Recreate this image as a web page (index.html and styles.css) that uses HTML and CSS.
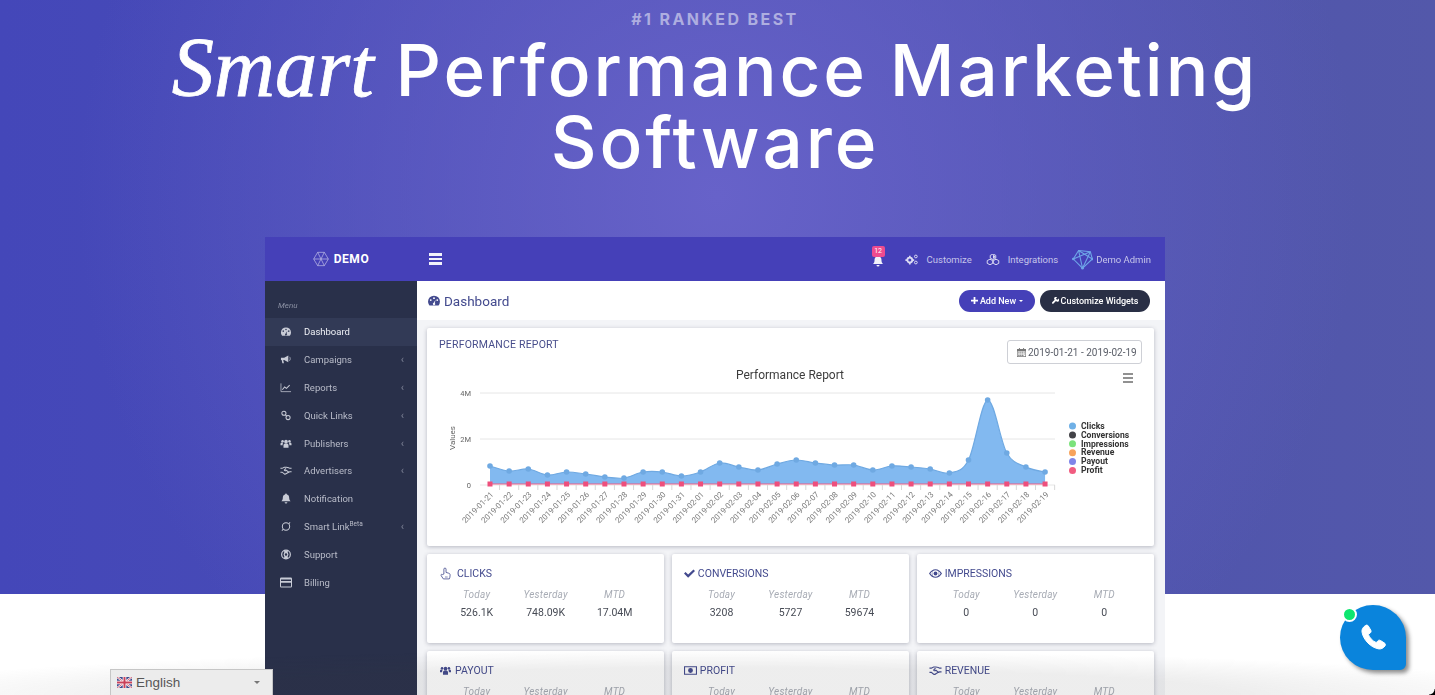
FILE: index.html
```html
<!DOCTYPE html>
<html lang="en">
<head>
  <meta charset="UTF-8" />
  <meta name="viewport" content="width=device-width, initial-scale=1.0"/>
  <title>Smart Performance Marketing Software</title>
  <link rel="stylesheet" href="styles.css">
</head>
<body>
  <svg class="sprite" aria-hidden="true">
    <symbol id="i-gauge" viewBox="0 0 24 24"><path fill-rule="evenodd" d="M12 3a11 11 0 0 0-11 11c0 2.700 1 5.200 2.600 7h16.800A11 11 0 0 0 23 14 11 11 0 0 0 12 3zM6 9.500a1.700 1.700 0 1 1 0 3.400 1.700 1.700 0 0 1 0-3.400zm12 0a1.700 1.700 0 1 1 0 3.400 1.700 1.700 0 0 1 0-3.400zM12 6a1.700 1.700 0 1 1 0 3.400A1.700 1.700 0 0 1 12 6zm3 4.500-1.600 6a2.200 2.200 0 1 1-2-.3z"/></symbol>
    <symbol id="i-bullhorn" viewBox="0 0 24 24"><path d="M1 8h7l9-5v15l-9-5H6l1.500 7H4L2.500 13H1z"/><path d="M19 6c3 1 3 8 0 9" fill="none" stroke="currentColor" stroke-width="1.500"/></symbol>
    <symbol id="i-chart" viewBox="0 0 24 24"><path d="M1 3v18h22" fill="none" stroke="currentColor" stroke-width="1.600"/><path d="M4 17l5-6 4 3 7-7" fill="none" stroke="currentColor" stroke-width="2.200"/></symbol>
    <symbol id="i-link" viewBox="0 0 24 24"><g fill="none" stroke="currentColor" stroke-width="2.200"><circle cx="7.500" cy="7" r="4.500"/><circle cx="16.500" cy="16.500" r="4.500"/><path d="M10.500 10l3 3.500"/></g></symbol>
    <symbol id="i-users" viewBox="0 0 24 24"><circle cx="12" cy="8" r="4"/><circle cx="4.500" cy="7" r="2.800"/><circle cx="19.500" cy="7" r="2.800"/><path d="M6.500 21v-5c0-3 2-4 5.500-4s5.500 1 5.500 4v5zM0 16v-3c0-2 1.500-3 4.500-3l1.500.5A6 6 0 0 0 4.800 16zM24 16v-3c0-2-1.500-3-4.500-3l-1.500.5a6 6 0 0 1 1.200 5.500z"/></symbol>
    <symbol id="i-hands" viewBox="0 0 28 20"><g fill="none" stroke="currentColor" stroke-width="2.400"><path d="M1 5h4l5-2.500h5l5 1 3 1.500h4M1 14h4l5 4c2 1 3 .5 4-.5l6-3.500 3-1h4"/><path d="M14 5l-4 4c1 2 3 2 5 .5l6 5"/></g></symbol>
    <symbol id="i-bell" viewBox="0 0 24 24"><path d="M12 1a2 2 0 0 1 2 2c4 1 5 4 5 8 0 3 1 5 3 7H2c2-2 3-4 3-7 0-4 1-7 5-8a2 2 0 0 1 2-2zM9 20h6a3 3 0 0 1-6 0z"/></symbol>
    <symbol id="i-swirl" viewBox="0 0 24 24"><g fill="none" stroke="currentColor" stroke-width="2.200"><circle cx="12" cy="12" r="8"/><path d="M21 3l-3 3M3 21l3-3"/></g></symbol>
    <symbol id="i-support" viewBox="0 0 24 24"><g fill="none" stroke="currentColor" stroke-width="2.600"><circle cx="12" cy="12" r="9.500"/><circle cx="12" cy="12" r="4"/></g><path d="M8 3h8v5H8zM8 16h8v5H8z"/></symbol>
    <symbol id="i-card" viewBox="0 0 24 20"><path fill-rule="evenodd" d="M0 2.500A2.500 2.500 0 0 1 2.500 0h19A2.500 2.500 0 0 1 24 2.500v15a2.500 2.500 0 0 1-2.500 2.500h-19A2.500 2.500 0 0 1 0 17.500zM2 4v3h20V4zm0 6.500V18h20v-7.500z"/></symbol>
    <symbol id="i-cogs" viewBox="0 0 24 20"><g fill="none" stroke="currentColor"><circle cx="8" cy="11" r="4.500" stroke-width="3.400"/><circle cx="19" cy="4.500" r="2.500" stroke-width="1.800"/><circle cx="19" cy="15.500" r="2.500" stroke-width="1.800"/></g><path d="M6.500 3h3v3h-3zM6.500 16h3v3h-3zM0 9.500h3v3H0zM13 9.500h3v3h-3z"/></symbol>
    <symbol id="i-cubes" viewBox="0 0 24 20"><path d="M12 0l5 2.500v5L12 10 7 7.500v-5zM6.500 9.500l5 2.500v5l-5 2.500-5-2.500v-5zM17.500 9.500l5 2.500v5l-5 2.500-5-2.500v-5z" fill="none" stroke="currentColor" stroke-width="1.800"/><path d="M12 1.500l3.500 2v3L12 8.500z"/></symbol>
    <symbol id="i-plus" viewBox="0 0 12 12"><path d="M4.500 0h3v4.500H12v3H7.500V12h-3V7.500H0v-3h4.500z"/></symbol>
    <symbol id="i-wrench" viewBox="0 0 12 12"><path d="M11.600 2.400 9.500 4.500 7.500 4 7 2 9.100 0A3.300 3.300 0 0 0 4.600 4.800L.4 9a1.500 1.500 0 0 0 2.200 2.200l4.200-4.200a3.300 3.300 0 0 0 4.800-4.600z"/></symbol>
    <symbol id="i-calendar" viewBox="0 0 14 14"><path fill-rule="evenodd" d="M3 0h1.500v1.500h5V0H11v1.500h3V14H0V1.500h3zM1 5v8h12V5zm1 1h2v1.500H2zm3 0h2v1.500H5zm3 0h2v1.500H8zm3 0h1v1.500h-1zM2 8.500h2V10H2zm3 0h2V10H5zm3 0h2V10H8zm3 0h1V10h-1zM2 11h2v1.500H2zm3 0h2v1.500H5zm3 0h2v1.500H8z"/></symbol>
    <symbol id="i-pointer" viewBox="0 0 20 24"><path d="M7 13V4a2 2 0 0 1 4 0v6l5 1.500c2 .6 2.500 1.500 2.500 3.500 0 3-.5 5-1.500 7H6l-4-6c-1-2 1-3.500 2.500-2z" fill="none" stroke="currentColor" stroke-width="1.500"/><path d="M9 17h5v3H9z" opacity=".4"/></symbol>
    <symbol id="i-check" viewBox="0 0 16 12"><path d="M0 6l2.200-2.200L6 7.500 13.800 0 16 2.200 6 12z"/></symbol>
    <symbol id="i-eye" viewBox="0 0 24 16"><path fill-rule="evenodd" d="M12 0c5 0 9 3 12 8-3 5-7 8-12 8S3 13 0 8c3-5 7-8 12-8zm0 2a6 6 0 1 0 0 12 6 6 0 0 0 0-12zM2.500 8c1.200 1.800 2.500 3.200 4 4.200a8 8 0 0 1 0-8.400C5 4.800 3.700 6.200 2.500 8zm19 0c-1.200-1.800-2.500-3.200-4-4.200a8 8 0 0 1 0 8.400c1.500-1 2.800-2.400 4-4.200z"/><circle cx="12" cy="8" r="3.500"/></symbol>
    <symbol id="i-money" viewBox="0 0 24 18"><path fill-rule="evenodd" d="M0 1h24v16H0zm2 2v12h20V3zm10 1.500a4.500 4.500 0 1 1 0 9 4.500 4.500 0 0 1 0-9z"/></symbol>
    <symbol id="i-logo" viewBox="0 0 24 24"><g fill="none" stroke="currentColor" stroke-width="1"><path d="M7 2h10l6 10-6 10H7L1 12z"/><path d="M7 2l10 20M17 2L7 22M1 12h22"/></g></symbol>
    <symbol id="i-mesh" viewBox="0 0 32 32"><g fill="none" stroke="currentColor" stroke-width="1.600"><path d="M10 3l18 2 3 11-15 14L2 16z"/><path d="M10 3l6 27M28 5L2 16M31 16L10 3M28 5L16 30"/></g><circle cx="16" cy="30" r="2" fill="currentColor"/><circle cx="2" cy="16" r="2" fill="currentColor"/><circle cx="31" cy="16" r="2" fill="currentColor"/></symbol>
  </svg>

  <section class="hero">
    <p class="eyebrow">#1 RANKED BEST</p>
    <h1 class="headline"><em>Smart</em> Performance Marketing Software</h1>

    <div class="dash">
      <header class="topbar">
        <div class="brand"><svg class="ic brand-ic"><use href="#i-logo"/></svg>DEMO</div>
        <div class="burger"><span></span><span></span><span></span></div>
        <div class="top-right">
          <div class="bell"><svg class="ic bell-ic"><use href="#i-bell"/></svg><span class="badge">12</span></div>
          <a class="top-link"><svg class="ic top-ic"><use href="#i-cogs"/></svg>Customize</a>
          <a class="top-link"><svg class="ic top-ic"><use href="#i-cubes"/></svg>Integrations</a>
          <a class="top-link admin"><svg class="ic mesh-ic"><use href="#i-mesh"/></svg>Demo Admin</a>
        </div>
      </header>

      <div class="dash-body">
        <nav class="sidebar">
          <p class="menu-label">Menu</p>
          <a class="nav-item active"><svg class="ic nav-ic"><use href="#i-gauge"/></svg>Dashboard</a>
          <a class="nav-item"><svg class="ic nav-ic"><use href="#i-bullhorn"/></svg>Campaigns<i class="chev">&lsaquo;</i></a>
          <a class="nav-item"><svg class="ic nav-ic"><use href="#i-chart"/></svg>Reports<i class="chev">&lsaquo;</i></a>
          <a class="nav-item"><svg class="ic nav-ic"><use href="#i-link"/></svg>Quick Links<i class="chev">&lsaquo;</i></a>
          <a class="nav-item"><svg class="ic nav-ic"><use href="#i-users"/></svg>Publishers<i class="chev">&lsaquo;</i></a>
          <a class="nav-item"><svg class="ic nav-ic"><use href="#i-hands"/></svg>Advertisers<i class="chev">&lsaquo;</i></a>
          <a class="nav-item"><svg class="ic nav-ic"><use href="#i-bell"/></svg>Notification</a>
          <a class="nav-item"><svg class="ic nav-ic"><use href="#i-swirl"/></svg><span>Smart Link<sup>Beta</sup></span><i class="chev">&lsaquo;</i></a>
          <a class="nav-item"><svg class="ic nav-ic"><use href="#i-support"/></svg>Support</a>
          <a class="nav-item"><svg class="ic nav-ic"><use href="#i-card"/></svg>Billing</a>
        </nav>

        <main class="content">
          <div class="page-head">
            <h2 class="page-title"><svg class="ic title-ic"><use href="#i-gauge"/></svg>Dashboard</h2>
            <div class="head-btns">
              <button class="pill pill-blue"><svg class="ic pill-ic"><use href="#i-plus"/></svg>Add New<i class="caret"></i></button>
              <button class="pill pill-dark"><svg class="ic pill-ic"><use href="#i-wrench"/></svg>Customize Widgets</button>
            </div>
          </div>

          <div class="panels">
            <div class="card report">
              <div class="report-head">
                <h3>PERFORMANCE REPORT</h3>
                <div class="date-box"><svg class="ic cal-ic"><use href="#i-calendar"/></svg>2019-01-21 - 2019-02-19</div>
              </div>
              <svg id="chart" class="chart" viewBox="0 0 727 182"></svg>
            </div>

            <div class="stats">
              <div class="card stat">
                <h4><svg class="ic stat-ic ptr"><use href="#i-pointer"/></svg>CLICKS</h4>
                <div class="stat-cols">
                  <div><em>Today</em><b>526.1K</b></div>
                  <div><em>Yesterday</em><b>748.09K</b></div>
                  <div><em>MTD</em><b>17.04M</b></div>
                </div>
              </div>
              <div class="card stat">
                <h4><svg class="ic stat-ic chk"><use href="#i-check"/></svg>CONVERSIONS</h4>
                <div class="stat-cols">
                  <div><em>Today</em><b>3208</b></div>
                  <div><em>Yesterday</em><b>5727</b></div>
                  <div><em>MTD</em><b>59674</b></div>
                </div>
              </div>
              <div class="card stat">
                <h4><svg class="ic stat-ic"><use href="#i-eye"/></svg>IMPRESSIONS</h4>
                <div class="stat-cols">
                  <div><em>Today</em><b>0</b></div>
                  <div><em>Yesterday</em><b>0</b></div>
                  <div><em>MTD</em><b>0</b></div>
                </div>
              </div>
              <div class="card stat">
                <h4><svg class="ic stat-ic"><use href="#i-users"/></svg>PAYOUT</h4>
                <div class="stat-cols">
                  <div><em>Today</em><b>0</b></div>
                  <div><em>Yesterday</em><b>0</b></div>
                  <div><em>MTD</em><b>0</b></div>
                </div>
              </div>
              <div class="card stat">
                <h4><svg class="ic stat-ic"><use href="#i-money"/></svg>PROFIT</h4>
                <div class="stat-cols">
                  <div><em>Today</em><b>0</b></div>
                  <div><em>Yesterday</em><b>0</b></div>
                  <div><em>MTD</em><b>0</b></div>
                </div>
              </div>
              <div class="card stat">
                <h4><svg class="ic stat-ic"><use href="#i-hands"/></svg>REVENUE</h4>
                <div class="stat-cols">
                  <div><em>Today</em><b>0</b></div>
                  <div><em>Yesterday</em><b>0</b></div>
                  <div><em>MTD</em><b>0</b></div>
                </div>
              </div>
            </div>
          </div>
        </main>
      </div>
    </div>
  </section>

  <div class="bottom-fade"></div>
  <div class="corner"></div>

  <div class="lang">
    <svg class="flag" viewBox="0 0 15 11">
      <rect width="15" height="11" rx="1" fill="#3b4a8c"/>
      <path d="M0 0l15 11M15 0L0 11" stroke="#fff" stroke-width="2.200"/>
      <path d="M0 0l15 11M15 0L0 11" stroke="#c9415a" stroke-width=".8"/>
      <path d="M7.500 0v11M0 5.500h15" stroke="#fff" stroke-width="3.600"/>
      <path d="M7.500 0v11M0 5.500h15" stroke="#c9415a" stroke-width="2"/>
    </svg>
    <span>English</span>
    <i class="lang-caret"></i>
  </div>

  <a class="call">
    <span class="call-dot"></span>
    <svg class="call-ic" viewBox="0 0 28 28"><path d="M6.500 1.500c1-.7 2.200-.5 2.800.5l2.500 4.200c.5 1 .3 2-.5 2.700L9.300 10.300c1 3.200 4.500 7 8 8.300l1.500-1.700c.7-.8 1.800-1 2.700-.4l4 2.600c1 .6 1.200 1.900.5 2.800-1.500 2.100-3.800 3.400-6.300 3-8-1.300-15.300-9-16.700-16.800C2.500 5.400 4.200 3 6.500 1.500z"/></svg>
  </a>

  <script src="chart.js"></script>
</body>
</html>
```

FILE: styles.css
```css
* {
  box-sizing: border-box;
}

html, body {
  height: 100%;
}

body {
  margin: 0;
  height: 695px;
  overflow: hidden;
  background: #fff;
  font-family: 'Inter', sans-serif;
}

.sprite {
  display: none;
}

.ic {
  fill: currentColor;
  flex: none;
}

/* hero */
.hero {
  height: 594px;
  padding: 10px 5px 0 0;
  text-align: center;
  background:
    radial-gradient(circle at 50% 33%, #6762c9 0, rgba(103, 98, 201, 0) 640px),
    linear-gradient(90deg, #4447b9, #5358aa);
}

.eyebrow {
  margin: 0;
  font-size: 16px;
  line-height: 18px;
  font-weight: 700;
  letter-spacing: 2.400px;
  color: #aeaee0;
}

.headline {
  margin: 4px auto 0;
  width: 1150px;
  font-size: 71px;
  line-height: 72px;
  font-weight: 500;
  letter-spacing: 2.900px;
  color: #fff;
}

.headline em {
  font-family: 'Liberation Serif', serif;
  font-size: 84.500px;
  letter-spacing: 0;
  -webkit-text-stroke: 0.8px #fff;
}

/* dashboard shot */
.dash {
  width: 900px;
  height: 458px;
  margin: 59px auto 0;
  overflow: hidden;
  text-align: left;
  font-family: 'Roboto', sans-serif;
  filter: blur(0.45px);
}

.topbar {
  display: flex;
  align-items: center;
  height: 44px;
  background: #4540b8;
  color: #fff;
}

.brand {
  display: flex;
  align-items: center;
  justify-content: center;
  gap: 5px;
  width: 152px;
  font-size: 12px;
  font-weight: 700;
  letter-spacing: 0.6px;
}

.brand-ic {
  width: 16px;
  height: 16px;
  color: #c5c4ea;
}

.burger {
  display: flex;
  flex-direction: column;
  gap: 2px;
  margin-left: 12px;
}

.burger span {
  display: block;
  width: 13px;
  height: 2.500px;
  background: #f2f2fb;
}

.top-right {
  display: flex;
  align-items: center;
  margin-left: auto;
  padding-right: 14px;
  font-size: 9.500px;
  color: #c6c5ea;
}

.bell {
  position: relative;
  width: 12px;
  height: 14px;
  margin-right: 21px;
  color: #f2f2fb;
}

.bell-ic {
  display: block;
  width: 12px;
  height: 12px;
  margin-top: 3px;
}

.badge {
  position: absolute;
  top: -6px;
  left: 0;
  width: 13px;
  height: 11px;
  border-radius: 2px;
  background: #ee4b8f;
  color: #fff;
  font-size: 7px;
  line-height: 11px;
  text-align: center;
}

.top-link {
  display: flex;
  align-items: center;
  margin-right: 14px;
}

.top-ic {
  width: 14px;
  height: 11px;
  margin-right: 8px;
  color: #dcdcf3;
}

.admin {
  margin-right: 0;
}

.mesh-ic {
  width: 21px;
  height: 22px;
  margin-right: 3px;
  color: #6ea6e8;
}

.dash-body {
  display: flex;
  height: 414px;
}

/* sidebar */
.sidebar {
  width: 152px;
  flex: none;
  background: #29304a;
  color: #b9bcc9;
  font-size: 9.500px;
}

.menu-label {
  margin: 0;
  padding: 20px 0 7px 13px;
  height: 37px;
  font-size: 8px;
  font-style: italic;
  color: #8b90a3;
}

.nav-item {
  display: flex;
  align-items: center;
  height: 27.800px;
  padding: 0 13px 0 15px;
}

.nav-item.active {
  background: #323a56;
  color: #eef0f5;
}

.nav-ic {
  width: 12px;
  height: 11px;
  margin-right: 12px;
  color: #c8cbd6;
}

.nav-item sup {
  font-size: 6.500px;
  line-height: 0;
}

.chev {
  margin-left: auto;
  font-style: normal;
  font-size: 11px;
  color: #7d8296;
}

/* content */
.content {
  flex: 1;
  min-width: 0;
  background: #f3f4f7;
}

.page-head {
  display: flex;
  align-items: center;
  justify-content: space-between;
  height: 39px;
  padding: 0 15px 0 10px;
  background: #fff;
}

.page-title {
  display: flex;
  align-items: center;
  margin: 0;
  font-size: 13.500px;
  font-weight: 400;
  color: #434a8e;
}

.title-ic {
  width: 14px;
  height: 13px;
  margin-right: 3px;
}

.head-btns {
  display: flex;
  gap: 5px;
}

.pill {
  display: flex;
  align-items: center;
  justify-content: center;
  height: 22px;
  padding: 0;
  border: 0;
  border-radius: 11px;
  color: #fff;
  font-family: inherit;
  font-size: 9px;
  font-weight: 500;
  white-space: nowrap;
}

.pill-blue {
  width: 76px;
  background: #4540b8;
}

.pill-dark {
  width: 110px;
  background: #292f45;
}

.pill-ic {
  width: 7px;
  height: 7px;
  margin-right: 2px;
}

.caret {
  width: 0;
  height: 0;
  margin-left: 3px;
  border: 2.500px solid transparent;
  border-top-color: #fff;
  border-bottom: 0;
}

.panels {
  padding: 8px 11px 0 10px;
}

.card {
  background: #fff;
  border-radius: 2px;
  box-shadow: 0 1px 4px rgba(40, 44, 70, 0.3);
}

.report {
  height: 218px;
}

.report-head {
  display: flex;
  justify-content: space-between;
  height: 36px;
  padding: 12px 12px 0 12px;
}

.report-head h3 {
  margin: 0;
  font-size: 10.500px;
  line-height: 9px;
  font-weight: 400;
  letter-spacing: 0.2px;
  color: #474d8b;
}

.date-box {
  display: flex;
  align-items: center;
  width: 135px;
  height: 24px;
  padding-left: 9px;
  border: 1px solid #ced0d6;
  border-radius: 3px;
  font-size: 10px;
  color: #5a5e68;
  background: #fff;
}

.cal-ic {
  width: 9px;
  height: 9px;
  margin-right: 2px;
  color: #777;
}

.chart {
  display: block;
  width: 727px;
  height: 182px;
}

.chart text {
  font-family: 'Roboto', sans-serif;
}

.stats {
  display: grid;
  grid-template-columns: repeat(3, 1fr);
  gap: 8px 7.500px;
  margin-top: 8px;
}

.stat {
  height: 89px;
}

.stat h4 {
  display: flex;
  align-items: center;
  height: 37px;
  margin: 0;
  padding: 1px 0 0 12px;
  font-size: 10.500px;
  font-weight: 400;
  color: #434a8e;
}

.stat-ic {
  width: 13px;
  height: 11px;
  margin-right: 3px;
}

.ptr {
  height: 13px;
  margin-right: 5px;
}

.chk {
  width: 11px;
  height: 9px;
}

.stat-cols {
  display: grid;
  grid-template-columns: 69px 69px 69px;
  justify-content: center;
  text-align: center;
  margin-top: -2px;
}

.stat-cols em {
  display: block;
  font-size: 10px;
  line-height: 12px;
  letter-spacing: 0.2px;
  color: #a8acb5;
}

.stat-cols b {
  display: block;
  margin-top: 6px;
  font-size: 10.500px;
  line-height: 12px;
  font-weight: 400;
  color: #474b55;
}

/* page bottom */
.bottom-fade {
  position: absolute;
  left: 0;
  right: 0;
  bottom: 0;
  height: 45px;
  background: radial-gradient(ellipse 60% 100% at 50% 100%, rgba(60, 60, 60, 0.09) 0, rgba(60, 60, 60, 0.09) 60%, rgba(60, 60, 60, 0) 100%);
  pointer-events: none;
}

.corner {
  position: absolute;
  right: 0;
  bottom: 0;
  width: 6px;
  height: 6px;
  background: radial-gradient(circle at 0 0, transparent 5px, #000 6px);
}

.lang {
  position: absolute;
  left: 110px;
  bottom: 0;
  display: flex;
  align-items: center;
  width: 163px;
  height: 26px;
  padding: 0 9px 0 6px;
  border: 1px solid #c6c6c6;
  border-bottom: 0;
  background: #ececec;
  color: #565656;
  font-family: 'Liberation Sans', sans-serif;
  font-size: 13.500px;
}

.flag {
  width: 15px;
  height: 11px;
  margin-right: 4px;
}

.lang-caret {
  width: 0;
  height: 0;
  margin-left: auto;
  margin-right: 3px;
  border: 3px solid transparent;
  border-top: 3px solid #777;
  border-bottom: 0;
}

.call {
  position: absolute;
  left: 1340px;
  top: 605px;
  display: flex;
  align-items: center;
  justify-content: center;
  width: 66px;
  height: 65px;
  border-radius: 50% 50% 6px 50%;
  background: #0a84dc;
  box-shadow: 3px 3px 4px rgba(0, 0, 0, 0.45);
}

.call-dot {
  position: absolute;
  left: 2px;
  top: 2px;
  width: 15px;
  height: 15px;
  border: 2px solid #fff;
  border-radius: 50%;
  background: #0ee66f;
}

.call-ic {
  width: 28px;
  height: 28px;
  fill: #fff;
  stroke: #fff;
  stroke-width: 1;
}
```

FILE: chart.js
```js
// y of each click point inside the chart svg
const ys = [102, 107, 105, 111, 108, 110, 113, 114, 108, 108, 112, 108, 99, 103, 106, 100, 96, 99, 101, 101, 106, 102, 103, 105, 109, 96, 36, 89, 103, 108];
const legend = [
  ["Clicks", "#6fb0e6"], ["Conversions", "#434348"], ["Impressions", "#7be27b"],
  ["Revenue", "#f7a35c"], ["Payout", "#8085e9"], ["Profit", "#f15c80"]
];
const X0 = 63, STEP = 19.14, BASE = 120;

function px(i) {
  return X0 + i * STEP;
}

function curve(points) {
  let d = `M${points[0][0]} ${points[0][1]}`;
  for (let i = 0; i < points.length - 1; i++) {
    const p0 = points[i - 1] || points[i], p1 = points[i];
    const p2 = points[i + 1], p3 = points[i + 2] || p2;
    const c1 = [p1[0] + (p2[0] - p0[0]) / 6, p1[1] + (p2[1] - p0[1]) / 6];
    const c2 = [p2[0] - (p3[0] - p1[0]) / 6, p2[1] - (p3[1] - p1[1]) / 6];
    d += `C${c1[0].toFixed(1)} ${c1[1].toFixed(1)} ${c2[0].toFixed(1)} ${c2[1].toFixed(1)} ${p2[0].toFixed(1)} ${p2[1]}`;
  }
  return d;
}

function dateLabel(i) {
  const d = new Date(Date.UTC(2019, 0, 21 + i));
  return d.toISOString().slice(0, 10);
}

const points = ys.map((y, i) => [px(i), y]);
const line = curve(points);
let out = "";

out += `<text x="363" y="15" text-anchor="middle" font-size="12" fill="#3c3c3c">Performance Report</text>`;
out += `<path d="M696 10h10M696 14h10M696 18h10" stroke="#6e6e6e" stroke-width="1.600"/>`;

// grid and y axis
[[29, "4M"], [75, "2M"], [121, "0"]].forEach(([y, label]) => {
  out += `<path d="M53 ${y}H628" stroke="#e6e6e6"/>`;
  out += `<text x="44" y="${y + 3}" text-anchor="end" font-size="7.500" fill="#666">${label}</text>`;
});
out += `<text transform="translate(28 74) rotate(-90)" text-anchor="middle" font-size="8" fill="#666">Values</text>`;

// area
out += `<path d="${line}L${px(29)} ${BASE}L${X0} ${BASE}Z" fill="#82b9f0"/>`;
out += `<path d="${line}" fill="none" stroke="#6fa9e2" stroke-width="1.200"/>`;
out += `<path d="M${X0} ${BASE}H${px(29)}" stroke="#ee5f86" stroke-width="1.200"/>`;

ys.forEach((y, i) => {
  const x = px(i);
  out += `<path d="M${x + STEP / 2} 121v5" stroke="#d8d8d8"/>`;
  out += `<circle cx="${x}" cy="${y}" r="2.800" fill="#6fa9e2"/>`;
  out += `<rect x="${x - 2.500}" y="${BASE - 2.500}" width="5" height="5" fill="#ee4f7c"/>`;
  out += `<text transform="translate(${x + 4} 131) rotate(-45)" text-anchor="end" font-size="8" fill="#7a7a7a">${dateLabel(i)}</text>`;
});

// legend
legend.forEach(([name, color], i) => {
  const y = 62 + i * 8.9;
  out += `<circle cx="645.500" cy="${y}" r="3.500" fill="${color}"/>`;
  out += `<text x="654" y="${y + 2.700}" font-size="8.600" font-weight="700" fill="#333">${name}</text>`;
});

document.getElementById("chart").innerHTML = out;
```
